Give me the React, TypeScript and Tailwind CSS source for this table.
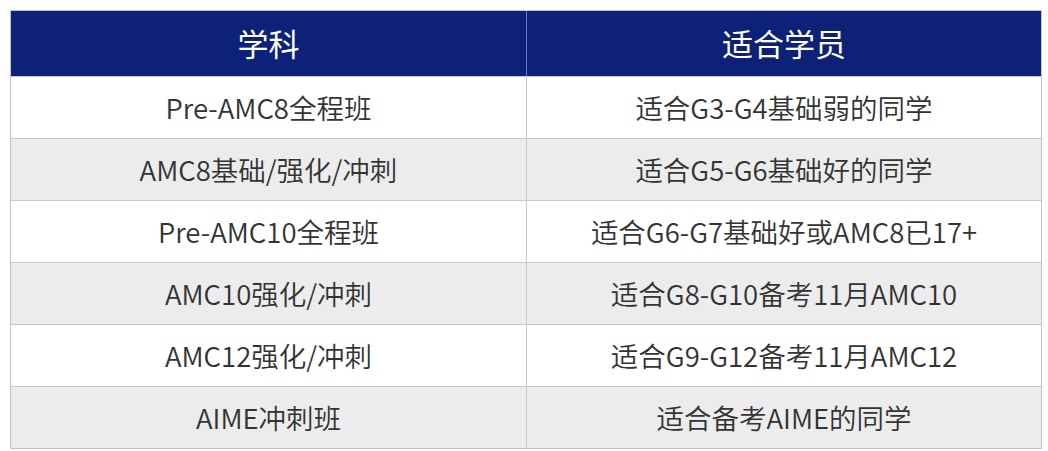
import React from "react";

const rows: [string, string][] = [
  ["Pre-AMC8全程班", "适合G3-G4基础弱的同学"],
  ["AMC8基础/强化/冲刺", "适合G5-G6基础好的同学"],
  ["Pre-AMC10全程班", "适合G6-G7基础好或AMC8已17+"],
  ["AMC10强化/冲刺", "适合G8-G10备考11月AMC10"],
  ["AMC12强化/冲刺", "适合G9-G12备考11月AMC12"],
  ["AIME冲刺班", "适合备考AIME的同学"],
];

export default function App() {
  return (
    <div
      className="w-[1048px] h-[451px] bg-white pt-[10px] pl-[10px]"
      style={{ fontFamily: '"Noto Sans CJK SC", "Noto Sans", sans-serif' }}
    >
      <div className="w-[1032px] border border-[#c4c4c4]">
        <div className="grid grid-cols-[516px_1fr] h-[65px] bg-[#0d2179] text-white text-[31px]">
          <div className="flex items-center justify-center border-r border-[#6d7bb0]">学科</div>
          <div className="flex items-center justify-center">适合学员</div>
        </div>
        {rows.map(([a, b], i) => (
          <div
            key={i}
            className={`grid grid-cols-[516px_1fr] h-[62px] text-[27.5px] font-[350] text-[#333333] border-t border-[#c8c8c8] ${
              i % 2 === 1 ? "bg-[#ececec]" : "bg-white"
            }`}
          >
            <div className="flex items-center justify-center border-r border-[#c8c8c8]">{a}</div>
            <div className="flex items-center justify-center">{b}</div>
          </div>
        ))}
      </div>
    </div>
  );
}
